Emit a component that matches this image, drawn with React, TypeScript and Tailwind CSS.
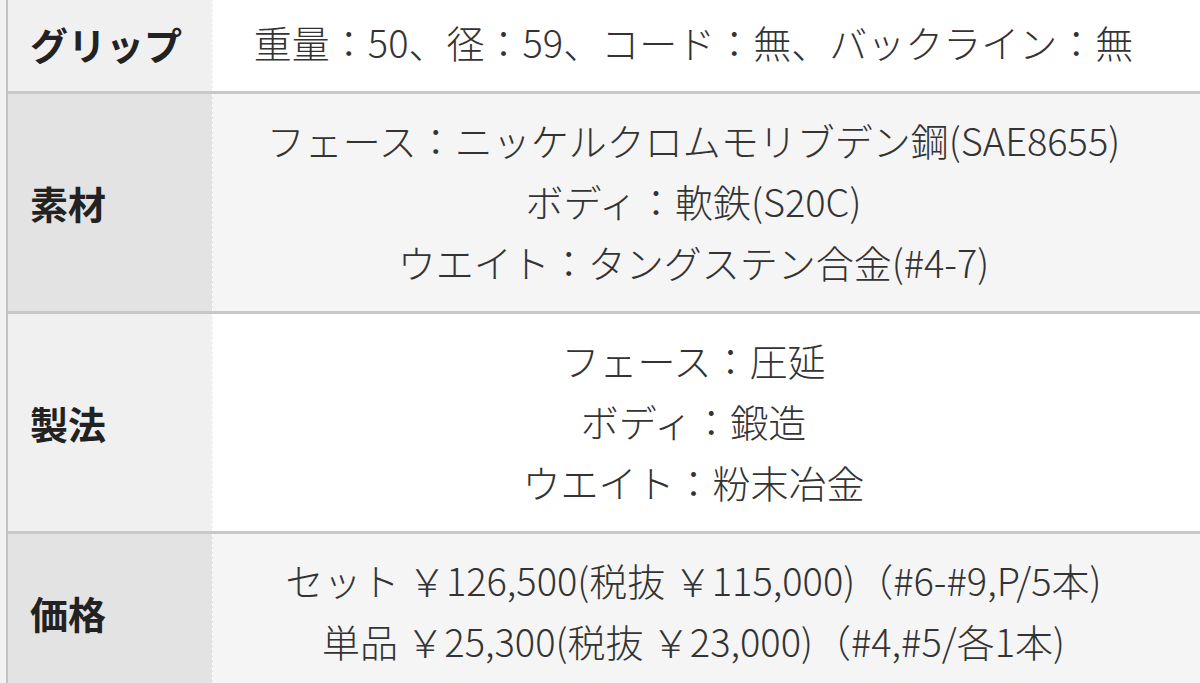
const rows = [
  {
    label: "グリップ",
    lines: ["重量：50、径：59、コード：無、バックライン：無"],
  },
  {
    label: "素材",
    lines: [
      "フェース：ニッケルクロムモリブデン鋼(SAE8655)",
      "ボディ：軟鉄(S20C)",
      "ウエイト：タングステン合金(#4-7)",
    ],
  },
  {
    label: "製法",
    lines: ["フェース：圧延", "ボディ：鍛造", "ウエイト：粉末冶金"],
  },
  {
    label: "価格",
    lines: [
      "セット ￥126,500(税抜 ￥115,000)（#6-#9,P/5本)",
      "単品 ￥25,300(税抜 ￥23,000)（#4,#5/各1本)",
    ],
  },
];

export default function App() {
  return (
    <div
      className="w-[1200px] h-[683px] overflow-hidden bg-[#f2f2f2] pl-[6px]"
      style={{ fontFamily: '"Noto Sans CJK JP", "Noto Sans", sans-serif' }}
    >
      <div className="-mt-[4px] border-l-2 border-[#c3c3c3]">
        {rows.map((row, i) => {
          const even = i % 2 === 1;
          return (
            <div key={row.label} className="flex border-b-[3px] border-[#c8c8c8]">
              <div
                className={`w-[205px] shrink-0 flex items-center pl-[22px] text-[38px] font-bold text-[#222] border-r border-dashed border-white ${
                  even ? "bg-[#e3e3e3]" : "bg-[#f0f0f0]"
                }`}
              >
                {row.label}
              </div>
              <div
                className={`flex-1 pt-[15px] pb-[19px] pr-[26px] text-center text-[38px] font-light leading-[61px] text-[#333] ${
                  even ? "bg-[#f5f5f5]" : "bg-white"
                }`}
              >
                {row.lines.map((line) => (
                  <div key={line} className="whitespace-nowrap">
                    {line}
                  </div>
                ))}
              </div>
            </div>
          );
        })}
      </div>
    </div>
  );
}
